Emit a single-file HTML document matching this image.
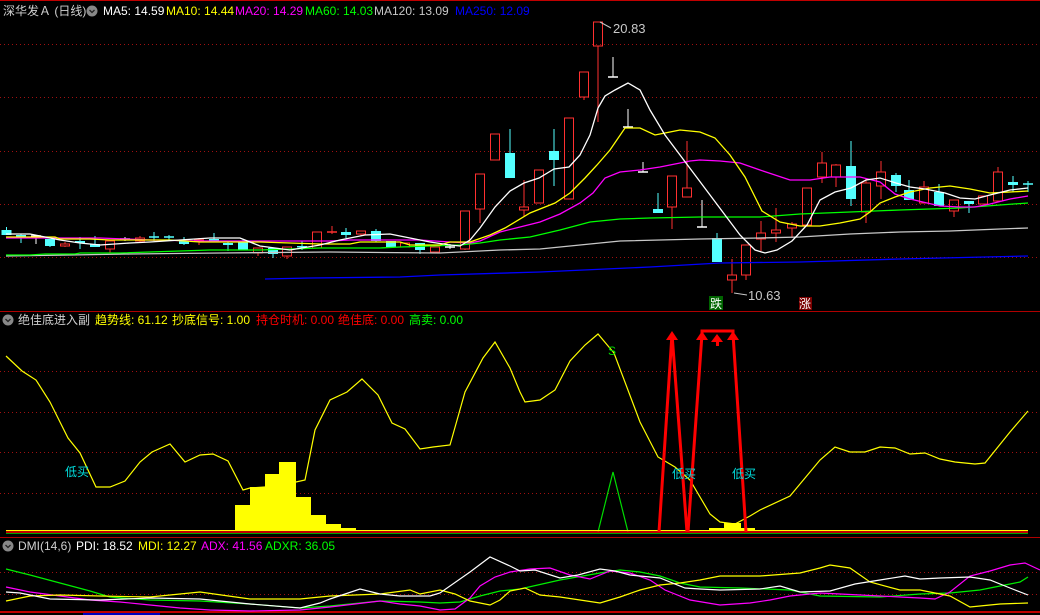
<!DOCTYPE html>
<html><head><meta charset="utf-8"><style>
html,body{margin:0;padding:0;background:#000;width:1040px;height:615px;overflow:hidden}
#w{position:relative;width:1040px;height:615px;background:#000;font-family:"Liberation Sans","Noto Sans CJK SC",sans-serif;font-size:12px}
.t{position:absolute;white-space:nowrap;line-height:14px}
svg{position:absolute;left:0;top:0}
</style></head><body><div id="w">
<svg id="s" width="1040" height="615" viewBox="0 0 1040 615">
<line x1="0" y1="0.5" x2="1040" y2="0.5" stroke="#c00000"/>
<g stroke="#a01010" stroke-dasharray="1 3" stroke-width="1">
<line x1="0" y1="44.5" x2="1040" y2="44.5"/><line x1="0" y1="97.5" x2="1040" y2="97.5"/><line x1="0" y1="151.5" x2="1040" y2="151.5"/><line x1="0" y1="204.5" x2="1040" y2="204.5"/><line x1="0" y1="257.5" x2="1040" y2="257.5"/>
<line x1="0" y1="371.5" x2="1040" y2="371.5"/><line x1="0" y1="412.5" x2="1040" y2="412.5"/><line x1="0" y1="452.5" x2="1040" y2="452.5"/><line x1="0" y1="493.5" x2="1040" y2="493.5"/>
<line x1="0" y1="572.5" x2="1040" y2="572.5"/><line x1="0" y1="594.5" x2="1040" y2="594.5"/>
</g>
<line x1="0" y1="311.5" x2="1040" y2="311.5" stroke="#b00000"/>
<line x1="0" y1="537.5" x2="1040" y2="537.5" stroke="#b00000"/>
<line x1="0" y1="612" x2="1040" y2="612" stroke="#c00000" stroke-width="2"/>
<line x1="83" y1="614" x2="160" y2="614" stroke="#0000c0" stroke-width="2"/>
<g id="cd"></g>
<g fill="none" stroke-width="1.3">
<polyline stroke="#0000ff" points="265,279 310,278 400,277 440,275 540,272 650,267 720,263 800,262 900,259 1028,256"/>
<polyline stroke="#c8c8c8" points="6,256 70,255 130,254 220,253 330,252 440,253 500,250 540,249 580,245 620,241 700,239 760,238 800,237 850,234 900,232 950,231 1000,229 1028,228"/>
<polyline stroke="#00ff00" points="6,255 30,255 45,254 75,254 80,253 120,253 210,250 260,250 320,248 380,248 400,247 460,245 480,243 500,240 530,237 560,230 590,222 620,219 650,218 700,217 760,217 800,214 850,212 900,210 960,208 1000,205 1028,203"/>
<polyline stroke="#ff00ff" points="6,238 100,238 150,240 200,241 330,241 350,240 420,240 450,242 470,243 480,241 500,232 520,227 540,222 560,214 580,203 593,193 605,178 620,172 640,170 660,167 690,161 700,160 720,161 740,163 760,170 790,180 810,180 830,177 860,177 880,182 895,194 910,199 940,206 960,207 975,207 990,204 1010,199 1028,196"/>
<polyline stroke="#ffff00" points="6,237 55,237 60,239 90,239 110,240 170,240 200,242 260,242 320,244 350,244 360,242 400,242 410,245 440,245 450,242 470,242 490,235 505,228 530,213 555,203 570,193 585,178 597,165 610,150 625,128 640,128 655,135 665,133 680,130 700,132 715,138 730,155 745,177 755,197 762,211 780,222 800,226 820,226 840,223 860,219 870,212 880,203 895,197 910,192 930,188 950,186 970,189 990,193 1010,192 1028,191"/>
<polyline stroke="#ffffff" points="6,234 30,234 40,236 60,240 80,243 100,245 130,243 150,242 180,240 210,238 240,238 260,246 290,250 320,245 340,240 365,235 390,234 410,238 430,242 450,245 460,246 470,240 480,228 495,207 510,191 524,183 539,178 554,169 569,167 580,155 590,135 598,108 605,96 615,90 628,83 640,90 650,110 665,135 680,155 695,175 710,195 725,215 740,235 755,250 765,253 777,250 792,241 807,225 820,200 835,192 851,188 866,180 880,178 896,183 910,187 925,189 945,193 960,198 975,199 990,195 1010,190 1028,188"/>
</g>
<line x1="600" y1="22" x2="611" y2="28" stroke="#c8c8c8"/>
<text x="613" y="33" fill="#c8c8c8" font-size="13" font-family="Liberation Sans">20.83</text>
<line x1="734" y1="293" x2="747" y2="295" stroke="#c8c8c8"/>
<text x="748" y="300" fill="#c8c8c8" font-size="13" font-family="Liberation Sans">10.63</text>
<rect x="709" y="296" width="14" height="14" fill="#006400"/>
<text x="710" y="308" fill="#fff" font-size="12" font-family="Noto Sans CJK SC,sans-serif">跌</text>
<rect x="799" y="297" width="13" height="13" fill="#7a0000"/>
<text x="799" y="308" fill="#fff" font-size="12" font-family="Noto Sans CJK SC,sans-serif">涨</text>
<!-- middle panel -->
<g fill="#ffff00">
<rect x="235" y="505" width="15" height="26"/><rect x="250" y="487" width="15" height="44"/><rect x="265" y="474" width="14" height="57"/><rect x="279" y="462" width="17" height="69"/><rect x="296" y="497" width="15" height="34"/><rect x="311" y="515" width="15" height="16"/><rect x="326" y="524" width="15" height="7"/><rect x="341" y="528" width="15" height="3"/>
<rect x="709" y="528" width="15" height="3"/><rect x="724" y="523" width="17" height="8"/><rect x="741" y="528" width="14" height="3"/><rect x="755" y="530" width="15" height="1"/>
</g>
<polyline fill="none" stroke="#ffff00" stroke-width="1.2" points="6,356 22,371 36,380 50,402 68,438 80,453 96,487 110,487 125,481 140,462 152,452 170,444 185,462 200,455 213,454 228,461 243,490 250,488 265,487 280,481 296,482 305,480 315,430 330,400 347,392 362,379 378,395 392,423 405,429 420,449 433,447 450,445 465,392 483,358 495,342 510,368 520,392 525,402 540,400 555,390 570,361 585,345 598,334 614,353 640,422 658,457 675,467 690,480 710,514 720,522 735,524 750,516 760,510 790,496 820,460 835,447 850,452 865,452 880,447 895,448 910,454 925,453 940,459 955,462 975,464 985,463 1010,432 1028,411"/>
<polyline fill="none" stroke="#00dd00" stroke-width="1.2" points="598,532 613,472 628,532"/>
<line x1="6" y1="530.5" x2="1028" y2="530.5" stroke="#ffff00"/>
<line x1="6" y1="532" x2="1028" y2="532" stroke="#ff0000" stroke-width="1.5"/>
<line x1="6" y1="533.5" x2="1028" y2="533.5" stroke="#00a000"/>
<g fill="none" stroke="#ff0000" stroke-width="3">
<polyline points="659,532 672,334 687,532"/>
<polyline points="688,532 702,334 702,331 733,331 733,334 746,532"/>
</g>
<g fill="#ff0000">
<polygon points="672,331 666,340 678,340"/><polygon points="702,331 696,340 708,340"/><polygon points="733,331 727,340 739,340"/>
<polygon points="717,334 711,342 723,342"/><rect x="716" y="341" width="3" height="5"/>
</g>
<text x="608" y="355" fill="#00dd00" font-size="12" font-family="Liberation Sans">S</text>
<g fill="#00e0e0" font-size="12" font-family="Noto Sans CJK SC,sans-serif">
<text x="65" y="476">低买</text><text x="672" y="478">低买</text><text x="732" y="478">低买</text>
</g>
<!-- DMI -->
<g fill="none" stroke-width="1.2">
<polyline stroke="#00ee00" points="6,569 30,575 60,583 90,591 110,597 150,600 200,601 250,604 300,608 330,606 380,601 420,602 440,603 460,602 480,596 500,591 520,589 560,580 600,573 620,570 640,572 660,576 680,583 700,587 740,588 790,590 820,596 880,597 920,594 950,593 980,590 1000,586 1020,582 1028,577"/>
<polyline stroke="#ff00ff" points="6,587 30,592 60,596 90,600 120,602 150,605 180,608 210,610 250,611 300,610 330,607 380,601 400,604 420,606 440,610 455,609 470,598 480,586 495,577 510,572 530,569 550,568 570,575 590,579 610,571 630,573 650,580 665,590 690,600 720,605 750,603 770,600 790,596 820,593 860,595 900,597 920,598 935,599 950,592 970,576 990,571 1010,565 1025,563 1040,570"/>
<polyline stroke="#ffff00" points="6,601 30,596 60,595 100,596 150,597 200,592 250,599 300,599 330,596 380,594 410,590 420,594 440,590 455,594 470,601 490,605 500,600 510,591 525,588 540,595 560,597 580,600 600,603 620,597 640,590 660,585 680,583 700,580 720,576 760,576 800,573 820,568 830,565 850,568 870,582 900,590 920,590 950,596 970,607 980,606 1000,604 1028,603"/>
<polyline stroke="#ffffff" points="6,592 20,593 50,599 100,600 150,598 200,599 250,604 300,608 320,603 330,599 360,589 380,594 400,596 430,596 440,593 470,572 490,557 510,566 520,571 535,570 560,578 578,575 600,569 615,571 630,575 660,578 685,588 700,589 720,590 760,589 780,586 800,592 830,591 855,584 880,580 905,576 920,579 940,578 970,577 990,580 1010,588 1028,595"/>
</g>
<g fill="#888"><circle cx="92" cy="11" r="5.5"/><circle cx="8" cy="320" r="5.5"/><circle cx="8" cy="546" r="5.5"/></g>
<g fill="none" stroke="#222" stroke-width="1.3"><polyline points="89.5,10 92,12.5 94.5,10"/><polyline points="5.5,319 8,321.5 10.5,319"/><polyline points="5.5,545 8,547.5 10.5,545"/></g>
</svg>
<div class="t" style="left:3px;top:4px;color:#d0d0d0">深华发Ａ (日线)</div>
<div class="t" style="left:103px;top:4px;color:#fff">MA5: 14.59</div>
<div class="t" style="left:166px;top:4px;color:#ffff00">MA10: 14.44</div>
<div class="t" style="left:235px;top:4px;color:#ff00ff">MA20: 14.29</div>
<div class="t" style="left:305px;top:4px;color:#00ff00">MA60: 14.03</div>
<div class="t" style="left:374px;top:4px;color:#c8c8c8">MA120: 13.09</div>
<div class="t" style="left:455px;top:4px;color:#0000ff">MA250: 12.09</div>
<div class="t" style="left:18px;top:313px;color:#d0d0d0">绝佳底进入副</div>
<div class="t" style="left:95px;top:313px;color:#ffff00">趋势线: 61.12</div>
<div class="t" style="left:172px;top:313px;color:#ffff00">抄底信号: 1.00</div>
<div class="t" style="left:256px;top:313px;color:#ff0000">持仓时机: 0.00</div>
<div class="t" style="left:338px;top:313px;color:#ff0000">绝佳底: 0.00</div>
<div class="t" style="left:409px;top:313px;color:#00ff00">高卖: 0.00</div>
<div class="t" style="left:18px;top:539px;color:#d0d0d0">DMI(14,6)</div>
<div class="t" style="left:76px;top:539px;color:#fff">PDI: 18.52</div>
<div class="t" style="left:138px;top:539px;color:#ffff00">MDI: 12.27</div>
<div class="t" style="left:201px;top:539px;color:#ff00ff">ADX: 41.56</div>
<div class="t" style="left:265px;top:539px;color:#00ff00">ADXR: 36.05</div>
</div>
<script>
var D=[[6.5,'c',230,235,227,235],[21,'c',235,238,234,243],[36,'w',236,236,236,244],[50,'c',239,246,239,247],[65,'r',244,246,242,247],[80,'c',241,243,237,249],[95,'c',244,247,236,247],[110,'r',241,249,241,253],[125,'w',239,239,237,241],[140,'r',238,241,236,242],[154,'x',237,237,232,241],[169,'x',237,237,235,240],[184,'c',241,244,237,245],[199,'y',240,240,238,245],[214,'c',239,240,233,242],[228,'c',243,245,242,251],[243,'c',242,250,239,250],[258,'r',248,253,248,256],[273,'c',248,254,248,258],[287,'r',247,256,247,259],[302,'c',246,247,241,250],[317,'r',232,248,232,248],[332,'y',232,232,226,234],[346,'c',232,235,228,238],[361,'r',231,234,231,236],[376,'c',231,241,229,242],[391,'c',241,247,241,247],[405,'r',243,247,243,247],[420,'c',243,250,243,254],[435,'r',247,252,247,252],[450,'w',247,247,244,249],[465,'r',211,249,211,250],[480,'r',174,209,174,223],[495,'r',134,160,134,160],[510,'c',153,178,129,178],[524,'r',207,210,180,217],[539,'r',170,203,170,203],[554,'c',151,160,129,186],[569,'r',118,199,118,199],[584,'r',72,97,72,100],[598,'r',22,46,22,122],[613,'w',77,77,57,77],[628,'w',127,127,109,127],[643,'w',172,172,162,172],[658,'c',209,213,193,213],[672,'r',176,207,176,229],[687,'r',188,197,141,197],[702,'w',227,227,200,227],[717,'c',238,262,233,262],[732,'r',275,280,259,293],[746,'r',245,275,245,280],[761,'r',233,239,221,251],[776,'r',230,233,208,242],[792,'r',224,228,222,238],[807,'r',188,225,188,225],[822,'r',163,177,152,183],[836,'r',165,177,164,187],[851,'c',166,199,141,206],[866,'r',183,212,178,223],[881,'r',172,186,161,199],[896,'c',175,186,173,192],[909,'c',190,200,180,200],[924,'r',187,203,181,203],[939,'c',192,206,184,206],[954,'r',200,211,200,217],[969,'c',201,204,201,213],[983,'r',196,204,196,204],[998,'r',172,201,167,201],[1013,'c',182,185,176,192],[1028,'x',184,184,181,192]];
var h='';D.forEach(function(d){var x=d[0],t=d[1],a=d[2],b=d[3],hi=d[4],lo=d[5];
if(t=='r'){h+='<line x1="'+x+'" y1="'+hi+'" x2="'+x+'" y2="'+a+'" stroke="#ff3030"/><line x1="'+x+'" y1="'+b+'" x2="'+x+'" y2="'+lo+'" stroke="#ff3030"/><rect x="'+(x-4.5)+'" y="'+a+'" width="9" height="'+Math.max(b-a,1)+'" fill="none" stroke="#ff3030"/>';}
else if(t=='c'){h+='<line x1="'+x+'" y1="'+hi+'" x2="'+x+'" y2="'+lo+'" stroke="#54ffff"/><rect x="'+(x-5)+'" y="'+a+'" width="10" height="'+Math.max(b-a,1.5)+'" fill="#54ffff"/>';}
else{var c=t=='w'?'#fff':(t=='x'?'#54ffff':'#ff3030');h+='<line x1="'+x+'" y1="'+hi+'" x2="'+x+'" y2="'+lo+'" stroke="'+c+'"/><line x1="'+(x-5)+'" y1="'+a+'" x2="'+(x+5)+'" y2="'+a+'" stroke="'+c+'" stroke-width="1.5"/>';}});
document.getElementById('cd').innerHTML=h;
</script>
</body></html>
